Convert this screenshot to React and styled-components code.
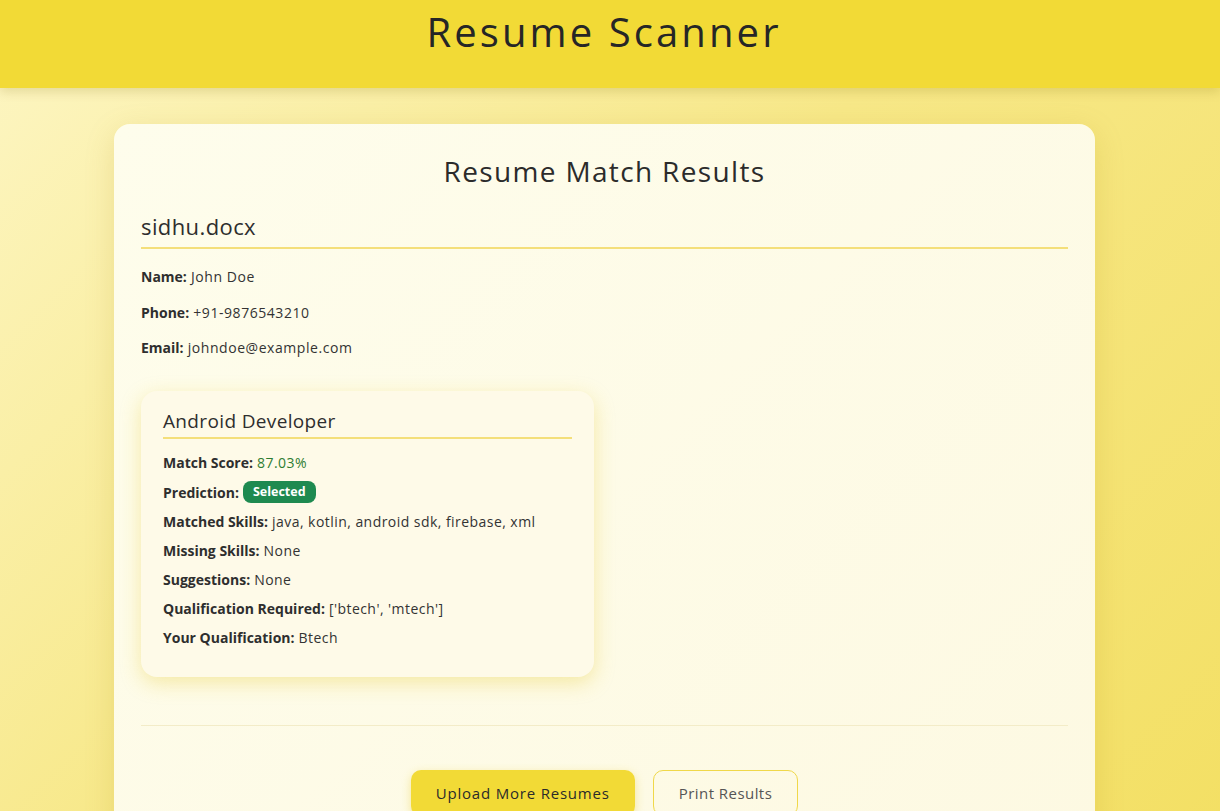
import React from "react";
import styled, { createGlobalStyle } from "styled-components";

const Global = createGlobalStyle`
  html, body { margin: 0; padding: 0; }
  html::-webkit-scrollbar { display: none; }
  body {
    font-family: "Open Sans", "Noto Sans", sans-serif;
    color: #2b2b2b;
    min-height: 100vh;
    background: linear-gradient(135deg, #fdf6c4 0%, #f7e888 45%, #f3df62 100%);
  }
`;

const Header = styled.header`
  height: 88px;
  background: #f2da36;
  display: flex;
  justify-content: center;
  padding-right: 12px;
  box-shadow: 0 4px 10px rgba(120, 100, 0, 0.18);
  position: relative;
  z-index: 1;
`;

const Brand = styled.h1`
  margin: 8px 0 0;
  font-size: 40px;
  font-weight: 500;
  letter-spacing: 3.1px;
  color: #262626;
  line-height: 48px;
`;

const Main = styled.main`
  display: flex;
  justify-content: center;
  padding: 36px 11px 40px 0;
`;

const Card = styled.section`
  width: 981px;
  box-sizing: border-box;
  background: linear-gradient(135deg, #fefdec 0%, #fdf9e2 100%);
  border-radius: 16px;
  padding: 28px 27px 40px;
  box-shadow: 0 8px 30px rgba(170, 140, 0, 0.18);
`;

const Title = styled.h2`
  margin: 0 0 20px;
  text-align: center;
  font-size: 28px;
  font-weight: 400;
  letter-spacing: 1.35px;
  line-height: 38px;
  color: #2b2b2b;
`;

const FileName = styled.h3`
  margin: 0;
  font-size: 22px;
  font-weight: 500;
  letter-spacing: 0.4px;
  line-height: 32px;
  padding-bottom: 5px;
  border-bottom: 2px solid #f4df7a;
  color: #2e2e2e;
`;

const Fields = styled.div`
  display: flex;
  flex-direction: column;
  gap: 14.5px;
  margin-top: 17px;
`;

const Field = styled.div`
  font-size: 14px;
  line-height: 21px;
  letter-spacing: 0.55px;
  color: #333;
`;

const Label = styled.b`
  font-weight: 700;
  letter-spacing: 0;
  color: #2e2e2e;
`;

const Jobs = styled.div`
  display: flex;
  margin-top: 33px;
`;

const JobCard = styled.div`
  width: 453px;
  box-sizing: border-box;
  background: #fefae8;
  border-radius: 16px;
  padding: 17px 22px 29px;
  box-shadow: 0 6px 20px rgba(230, 200, 40, 0.35);
`;

const JobTitle = styled.h4`
  margin: 0 0 13px;
  font-size: 19px;
  font-weight: 500;
  letter-spacing: 0.35px;
  line-height: 26px;
  padding-bottom: 3px;
  border-bottom: 2px solid #f4df7a;
  color: #2e2e2e;
`;

const JobLines = styled.div`
  display: flex;
  flex-direction: column;
  gap: 8px;
`;

const Line = styled.div`
  font-size: 14px;
  line-height: 21px;
  letter-spacing: 0.45px;
  color: #333;
  display: flex;
  align-items: center;
  gap: 4px;
`;

const Score = styled.span`
  color: #2e7d32;
`;

const Badge = styled.span`
  display: inline-block;
  background: #1e8a50;
  color: #fff;
  font-weight: 700;
  font-size: 12.5px;
  letter-spacing: 0;
  line-height: 22px;
  padding: 0 10px;
  border-radius: 8px;
`;

const Divider = styled.hr`
  border: none;
  border-top: 1px solid #f3ecc8;
  margin: 48px 0 44px;
`;

const Actions = styled.div`
  display: flex;
  justify-content: center;
  gap: 18px;
`;

const Button = styled.button`
  font-family: inherit;
  font-size: 15px;
  letter-spacing: ${(p) => (p.$primary ? "0.8px" : "0.45px")};
  height: 46px;
  padding: 0 25px;
  border-radius: 10px;
  cursor: pointer;
  color: ${(p) => (p.$primary ? "#2a2a2a" : "#555")};
  background: ${(p) => (p.$primary ? "#f2da36" : "transparent")};
  border: ${(p) => (p.$primary ? "none" : "1px solid #f0d84a")};
  box-shadow: ${(p) => (p.$primary ? "0 3px 10px rgba(230,200,40,0.4)" : "none")};
`;

export default function App() {
  return (
    <>
      <Global />
      <Header>
        <Brand>Resume Scanner</Brand>
      </Header>
      <Main>
        <Card>
          <Title>Resume Match Results</Title>
          <FileName>sidhu.docx</FileName>
          <Fields>
            <Field><Label>Name:</Label> John Doe</Field>
            <Field><Label>Phone:</Label> +91-9876543210</Field>
            <Field><Label>Email:</Label> johndoe@example.com</Field>
          </Fields>
          <Jobs>
            <JobCard>
              <JobTitle>Android Developer</JobTitle>
              <JobLines>
                <Line><Label>Match Score:</Label><Score>87.03%</Score></Line>
                <Line><Label>Prediction:</Label><Badge>Selected</Badge></Line>
                <Line><Label>Matched Skills:</Label>java, kotlin, android sdk, firebase, xml</Line>
                <Line><Label>Missing Skills:</Label>None</Line>
                <Line><Label>Suggestions:</Label>None</Line>
                <Line><Label>Qualification Required:</Label>['btech', 'mtech']</Line>
                <Line><Label>Your Qualification:</Label>Btech</Line>
              </JobLines>
            </JobCard>
          </Jobs>
          <Divider />
          <Actions>
            <Button $primary>Upload More Resumes</Button>
            <Button>Print Results</Button>
          </Actions>
        </Card>
      </Main>
    </>
  );
}
